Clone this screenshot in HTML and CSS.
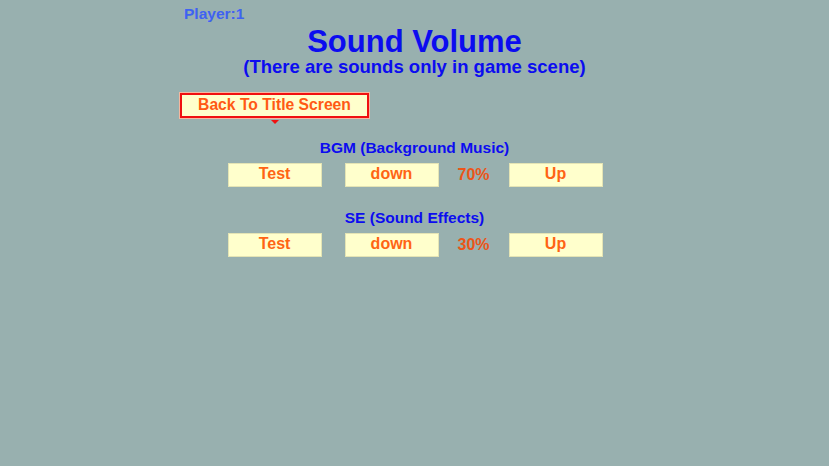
FILE: index.html
```html
<!DOCTYPE html>
<html lang="en">
<head>
    <meta charset="UTF-8">
    <meta name="viewport" content="width=device-width, initial-scale=1.0">
    <title>Sound Volume</title>
    <link rel="stylesheet" href="styles.css">
</head>
<body>
    <div class="screen">
        <div class="player">Player:1</div>
        <h1 class="title">Sound Volume</h1>
        <div class="subtitle">(There are sounds only in game scene)</div>

        <div class="back-row">
            <button class="back-button">Back To Title Screen</button>
            <span class="cursor"></span>
        </div>

        <div class="volume-group">
            <div class="volume-label">BGM (Background Music)</div>
            <div class="volume-row">
                <button class="button">Test</button>
                <button class="button">down</button>
                <span class="volume-value">70%</span>
                <button class="button">Up</button>
            </div>
        </div>

        <div class="volume-group">
            <div class="volume-label">SE (Sound Effects)</div>
            <div class="volume-row">
                <button class="button">Test</button>
                <button class="button">down</button>
                <span class="volume-value">30%</span>
                <button class="button">Up</button>
            </div>
        </div>
    </div>
</body>
</html>
```

FILE: styles.css
```css
html, body {
    height: 100%;
}
body {
    margin: 0;
    font-family: "Liberation Sans", Arial, sans-serif;
    font-weight: bold;
    background-color: #98b0af; /* Grey-green backdrop */
}
.screen {
    width: 469px;
    margin: 0 auto;
    padding-top: 5px;
}
.player {
    padding-left: 4px;
    font-size: 15.5px;
    line-height: 18px;
    color: #3f62f2; /* Light blue player tag */
}
.title {
    margin: 3px 0 0;
    text-align: center;
    font-size: 31px;
    line-height: 31px;
    color: #0c0cf0;
}
.subtitle {
    text-align: center;
    font-size: 18.5px;
    line-height: 20px;
    color: #0c0cf0;
}
.back-row {
    position: relative;
    margin-top: 16px;
    height: 45px;
}
.back-button {
    display: block;
    width: 189px;
    height: 25px;
    padding: 0 0 1px;
    border: 2px solid #f01010; /* Red selection frame */
    outline: 1px solid #f4b8a0;
    background-color: #ffffcc;
    color: #ff5a14;
    font-family: inherit;
    font-weight: bold;
    font-size: 15.7px;
}
/* Small marker under the selected button */
.cursor {
    position: absolute;
    left: 91px;
    top: 27px;
    border-left: 4px solid transparent;
    border-right: 4px solid transparent;
    border-top: 4px solid #f01010;
}
.volume-group {
    margin-bottom: 21px;
}
.volume-label {
    text-align: center;
    font-size: 15.5px;
    line-height: 20px;
    color: #0c0cf0;
    margin-bottom: 5px;
}
.volume-row {
    display: flex;
    justify-content: center;
    align-items: center;
    padding-left: 1px;
}
.button {
    width: 94px;
    height: 24px;
    padding: 0 0 2px;
    border: 1px solid #e4e4b4;
    background-color: #ffffcc;
    color: #ff6414;
    font-family: inherit;
    font-weight: bold;
    font-size: 16px;
}
.button + .button {
    margin-left: 23px;
}
.volume-value {
    width: 70px;
    padding-bottom: 1px;
    text-align: center;
    font-size: 16px;
    color: #ec5518;
}
```
